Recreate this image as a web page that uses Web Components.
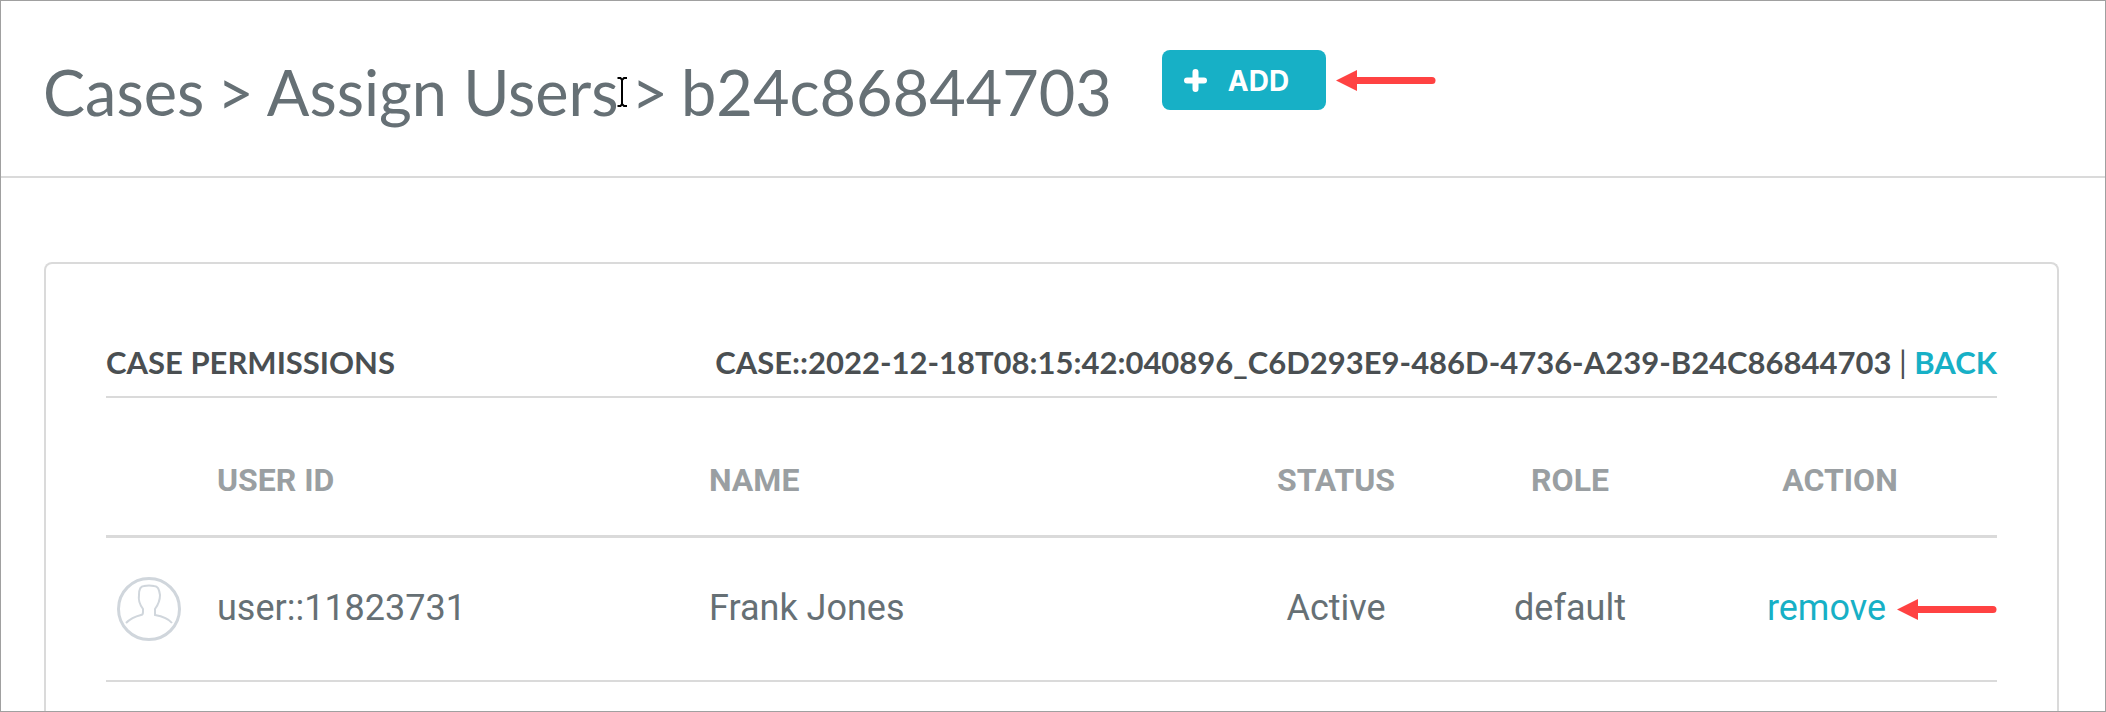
<!DOCTYPE html>
<html lang="en">
<head>
<meta charset="utf-8">
<title>Assign Users</title>
<style>
  html, body { height: 100%; margin: 0; }
  body { overflow: hidden; background: #fff; color: #667075; font-family: Roboto, sans-serif;
    --line: #dadada; --accent: #17b0c6; --callout: #ff4242; }
</style>
</head>
<body>
<app-frame>
  <page-header slot="header">
    <span>Cases</span>
    <span>&gt;</span>
    <span>Assign Users<text-cursor></text-cursor></span>
    <span>&gt;</span>
    <span>b24c86844703</span>
    <add-button slot="action">ADD</add-button>
    <callout-arrow slot="note" length="100"></callout-arrow>
  </page-header>
  <permissions-card>
    <span slot="title">CASE PERMISSIONS</span>
    <span slot="case">CASE::2022-12-18T08:15:42:040896_C6D293E9-486D-4736-A239-B24C86844703</span>
    <user-table></user-table>
  </permissions-card>
</app-frame>

<script>
const define = (name, html, setup) => {
  const template = document.createElement('template');
  template.innerHTML = html;
  customElements.define(name, class extends HTMLElement {
    constructor() {
      super();
      this.attachShadow({ mode: 'open' }).append(template.content.cloneNode(true));
    }
    connectedCallback() { if (setup) setup(this); }
  });
};

define('app-frame', `
  <style>
    :host { display: flex; flex-direction: column; box-sizing: border-box; height: 100%; overflow: hidden; border: 1px solid #a0a0a0; }
    main { flex: 1; min-height: 0; display: flex; padding: 84px 46px 0 43px; }
    ::slotted(permissions-card) { flex: 1; min-width: 0; }
  </style>
  <slot name="header"></slot>
  <main><slot></slot></main>`);

define('page-header', `
  <style>
    :host { display: block; border-bottom: 2px solid var(--line); }
    header { display: flex; align-items: flex-start; padding: 49px 42px 46px; }
    h1 { display: flex; gap: 13px; margin: 0; padding-top: 4px; font: 400 63px/76px Lato, sans-serif; white-space: nowrap; }
    .action { margin-left: 50px; display: flex; align-items: center; gap: 10px; }
  </style>
  <header>
    <h1><slot></slot></h1>
    <div class="action"><slot name="action"></slot><slot name="note"></slot></div>
  </header>`);

define('text-cursor', `
  <style>
    :host { position: relative; }
    svg { position: absolute; left: -2px; top: 23px; }
  </style>
  <svg width="11" height="30" viewBox="0 0 11 30" fill="none" stroke="#000" stroke-width="2" aria-hidden="true">
    <path d="M0.500 1H3.500L5 3L7 1H10M5 3V27M0.500 29H3.500L5 27L7 29H10"/>
  </svg>`);

define('add-button', `
  <style>
    :host { display: block; }
    button { display: flex; align-items: center; gap: 21px; height: 60px; padding: 0 37px 0 22px; border: 0; border-radius: 8px;
      background: var(--accent); color: #fff; font: 700 28px/60px Inter, sans-serif; cursor: pointer; }
    .label { padding-top: 2px; }
  </style>
  <button type="button">
    <svg width="23" height="23" viewBox="0 0 23 23" stroke="#fff" stroke-width="6" stroke-linecap="round" aria-hidden="true">
      <path d="M11.500 3V20M3 11.500H20"/>
    </svg>
    <span class="label"><slot></slot></span>
  </button>`);

define('callout-arrow', `
  <style>
    :host { display: block; }
    svg { display: block; }
  </style>
  <svg height="21" aria-hidden="true">
    <path d="M0 10.500L21 0V21Z" fill="var(--callout)"/>
    <line x1="20" y1="10.500" y2="10.500" stroke="var(--callout)" stroke-width="7" stroke-linecap="round"/>
  </svg>`, el => {
    const length = Number(el.getAttribute('length'));
    el.shadowRoot.querySelector('svg').setAttribute('width', length);
    el.shadowRoot.querySelector('line').setAttribute('x2', length - 4);
  });

define('permissions-card', `
  <style>
    :host { display: block; box-sizing: border-box; padding: 76px 60px; border: 2px solid var(--line); border-bottom: 0; border-radius: 8px 8px 0 0; }
    header { display: flex; justify-content: space-between; gap: 40px; padding-bottom: 12px; border-bottom: 2px solid var(--line);
      color: #4a4f52; font: 700 31px/44px Lato, sans-serif; white-space: nowrap; }
    h2 { margin: 0; font: inherit; }
    .bar { font-weight: 400; }
    a { color: var(--accent); text-decoration: none; }
  </style>
  <header>
    <h2><slot name="title"></slot></h2>
    <div><slot name="case"></slot> <span class="bar">|</span> <a href="#cases">BACK</a></div>
  </header>
  <slot></slot>`);

define('user-avatar', `
  <style>
    :host { display: block; }
    svg { display: block; }
  </style>
  <svg width="64" height="64" viewBox="0 0 64 64" fill="none" stroke="#d0d6dc" stroke-width="2" role="img" aria-label="User">
    <circle cx="32" cy="32" r="30.500" stroke-width="3"/>
    <path d="M9 46C14 41 20 39 24 38Q26 38 26 35L26 32C23 28 21 24 22 18C22 12 23 9 27 9Q32 8 37 9C41 9 42 12 43 18C43 24 41 28 38 32L38 38C44 39 51 41 55 46"/>
  </svg>`);

define('user-table', `
  <style>
    :host { display: block; }
    table { width: 100%; table-layout: fixed; border-collapse: separate; border-spacing: 0; }
    .avatar { width: 91px; }
    .id { width: 492px; }
    .status { width: 242px; }
    .role { width: 226px; }
    .action { width: 314px; }
    th, td { box-sizing: border-box; padding: 0 20px; text-align: left; white-space: nowrap; }
    th { height: 140px; padding-bottom: 35px; border-bottom: 3px solid var(--line); color: #9a9fa2;
      font: 700 32px/40px Roboto, sans-serif; vertical-align: bottom; }
    td { height: 144px; padding-bottom: 2px; border-bottom: 2px solid var(--line); font: 400 36px/44px Roboto, sans-serif; vertical-align: middle; }
    td.pic { padding: 0 0 0 11px; }
    td.act { padding: 0; }
    .mid { text-align: center; }
    .row { display: flex; justify-content: flex-end; align-items: center; gap: 11px; }
    a { padding-bottom: 2px; color: var(--accent); text-decoration: none; }
  </style>
  <table>
    <colgroup><col class="avatar"><col class="id"><col><col class="status"><col class="role"><col class="action"></colgroup>
    <thead>
      <tr>
        <th></th>
        <th scope="col">USER ID</th>
        <th scope="col">NAME</th>
        <th scope="col" class="mid">STATUS</th>
        <th scope="col" class="mid">ROLE</th>
        <th scope="col" class="mid">ACTION</th>
      </tr>
    </thead>
    <tbody>
      <tr>
        <td class="pic"><user-avatar></user-avatar></td>
        <td>user::11823731</td>
        <td>Frank Jones</td>
        <td class="mid">Active</td>
        <td class="mid">default</td>
        <td class="act"><div class="row"><a href="#remove">remove</a><callout-arrow length="100"></callout-arrow></div></td>
      </tr>
    </tbody>
  </table>`);
</script>
</body>
</html>
